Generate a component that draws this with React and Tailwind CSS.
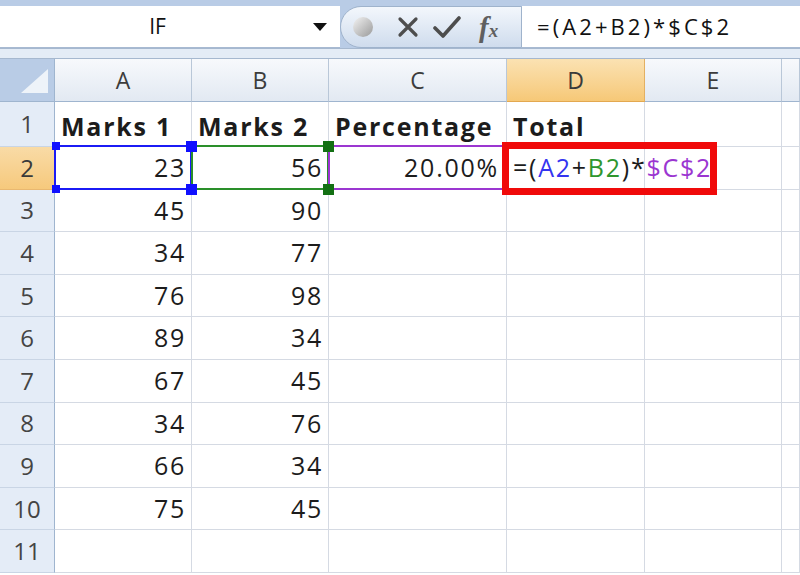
import React from "react";

const font = { fontFamily: '"Open Sans", "Liberation Sans", sans-serif' };

const columns = [
  { key: "A", w: "w-[137px]" },
  { key: "B", w: "w-[137px]" },
  { key: "C", w: "w-[178px]" },
  { key: "D", w: "w-[138px]" },
  { key: "E", w: "w-[137px]" },
  { key: "F", w: "w-[18px]" },
];

const marks = [
  [23, 56],
  [45, 90],
  [34, 77],
  [76, 98],
  [89, 34],
  [67, 45],
  [34, 76],
  [66, 34],
  [75, 45],
];

// selection outline with corner handles, drawn over a cell
const Outline = ({ color, handle, big, hideRight }) => (
  <>
    <div
      className={`absolute -left-px -top-[2px] -right-px -bottom-px border-2 ${color} ${hideRight ? "border-r-0" : ""}`}
    />
    <span className={`absolute -left-[3px] -top-[5px] w-[8px] h-[8px] ${handle}`} />
    <span className={`absolute -left-[3px] -bottom-[4px] w-[8px] h-[8px] ${handle}`} />
    {big && (
      <>
        <span className={`absolute -right-[6px] -top-[6px] w-[11px] h-[11px] z-10 ${handle}`} />
        <span className={`absolute -right-[6px] -bottom-[6px] w-[11px] h-[11px] z-10 ${handle}`} />
      </>
    )}
  </>
);

const RowHeader = ({ n, active, h }) => (
  <div
    className={`w-[55px] ${h} shrink-0 flex items-center justify-center border-r border-b text-[24px] ${
      active
        ? "bg-gradient-to-b from-[#f9dba6] to-[#f6c97c] border-r-[#e0a85a] border-b-[#e9b870] text-[#3a3a3a]"
        : "bg-[#e4ecf7] border-r-[#9fb5cf] border-b-[#c9d5e5] text-[#444]"
    }`}
  >
    {n}
  </div>
);

const Cell = ({ w, h, children, right, bold, extra = "" }) => (
  <div
    className={`${w} ${h} shrink-0 relative flex items-center border-r border-b border-[#d5dae3] text-[25px] tracking-[0.07em] text-[#1c1c1c] ${
      right ? "justify-end pr-[5px]" : "pl-[6px]"
    } ${bold ? "font-bold tracking-[0.07em] pt-[5px]" : ""} ${extra}`}
  >
    {children}
  </div>
);

export default function App() {
  return (
    <div className="w-[800px] h-[575px] overflow-hidden bg-white" style={font}>
      {/* formula bar */}
      <div className="bg-[#b9cce6] pt-[6px]">
        <div className="flex h-[42px]">
          <div className="w-[340px] bg-white flex items-center border-b border-[#a8bad2]">
            <div className="flex-1 text-center text-[21px] text-[#111] pl-[2px]">IF</div>
            <div className="w-0 h-0 border-l-[7px] border-r-[7px] border-t-[8px] border-l-transparent border-r-transparent border-t-[#111] mr-[13px]" />
          </div>
          <div className="w-[182px] flex items-center rounded-l-[24px] border border-[#9fb3cc] bg-gradient-to-b from-[#f3f7fc] to-[#cfdced]">
            <div className="ml-[12px] w-[20px] h-[20px] rounded-full bg-gradient-to-br from-[#f4f4f4] to-[#9a9a9a]" />
            <svg className="ml-[24px]" width="22" height="22" viewBox="0 0 22 22">
              <path d="M3 3 L19 19 M19 3 L3 19" stroke="#4d4d4d" strokeWidth="3.2" strokeLinecap="round" />
            </svg>
            <svg className="ml-[14px]" width="28" height="24" viewBox="0 0 28 24">
              <path d="M2 13 L10 21 L26 3" stroke="#4d4d4d" strokeWidth="3.6" fill="none" strokeLinejoin="round" strokeLinecap="round" />
            </svg>
            <div
              className="ml-[18px] text-[29px] italic font-bold text-[#5f5f5f] leading-none"
              style={{ fontFamily: '"Liberation Serif", serif' }}
            >
              f<span className="text-[19px]">x</span>
            </div>
          </div>
          <div className="flex-1 bg-white flex items-center pl-[15px] border-b border-[#a8bad2] text-[22px] tracking-[0.14em] text-[#111]">
            =(A2+B2)*$C$2
          </div>
        </div>
        <div className="h-[11px] bg-[#e4ecf6] border-t border-b border-[#a6b8cf]" />
      </div>

      {/* grid */}
      <div className="relative">
        {/* column headers */}
        <div className="flex h-[43px]">
          <div className="w-[55px] shrink-0 relative bg-[#b9cce6] border-r border-b border-[#9fb5cf]">
            <svg className="absolute right-[6px] bottom-[8px]" width="27" height="24" viewBox="0 0 27 24">
              <polygon points="27,0 27,24 0,24" fill="#eef3f9" />
            </svg>
          </div>
          {columns.map((c) => (
            <div
              key={c.key}
              className={`${c.w} shrink-0 flex items-center justify-center border-r border-b text-[23px] ${
                c.key === "D"
                  ? "bg-gradient-to-b from-[#fbe2b2] to-[#f6c877] border-r-[#e3b062] border-b-[#e3a850] text-[#3a3a3a]"
                  : "bg-gradient-to-b from-[#f7f9fc] to-[#e2e9f2] border-r-[#b9c7d8] border-b-[#9fb5cf] text-[#3c3c3c]"
              }`}
            >
              {c.key === "F" ? "" : c.key}
            </div>
          ))}
        </div>

        {/* row 1 */}
        <div className="flex">
          <RowHeader n={1} h="h-[45px]" />
          <Cell w="w-[137px]" h="h-[45px]" bold>Marks 1</Cell>
          <Cell w="w-[137px]" h="h-[45px]" bold>Marks 2</Cell>
          <Cell w="w-[178px]" h="h-[45px]" bold>Percentage</Cell>
          <Cell w="w-[138px]" h="h-[45px]" bold>Total</Cell>
          <Cell w="w-[137px]" h="h-[45px]" />
          <Cell w="w-[18px]" h="h-[45px]" />
        </div>

        {/* row 2 */}
        <div className="flex">
          <RowHeader n={2} h="h-[42.6px]" active />
          <Cell w="w-[137px]" h="h-[42.6px]" right>
            23
            <Outline color="border-[#1b1bf5]" handle="bg-[#1010ff]" big />
          </Cell>
          <Cell w="w-[137px]" h="h-[42.6px]" right>
            56
            <Outline color="border-[#2a8f2a]" handle="bg-[#137013]" big />
          </Cell>
          <Cell w="w-[178px]" h="h-[42.6px]" right extra="pr-[7px]">
            20.00%
            <Outline color="border-[#9b36d1]" handle="bg-[#8e22c8]" hideRight />
          </Cell>
          <Cell w="w-[138px]" h="h-[42.6px]" extra="overflow-visible whitespace-nowrap z-10">
            <span>
              =(<span className="text-[#3434f0]">A2</span>+<span className="text-[#2e962e]">B2</span>)*
              <span className="text-[#9b36d1]">$C$2</span>
            </span>
          </Cell>
          <Cell w="w-[137px]" h="h-[42.6px]" />
          <Cell w="w-[18px]" h="h-[42.6px]" />
        </div>

        {/* rows 3..11 */}
        {[...marks.slice(1), [null, null]].map((m, i) => (
          <div key={i} className="flex">
            <RowHeader n={i + 3} h="h-[42.6px]" />
            <Cell w="w-[137px]" h="h-[42.6px]" right>{m[0]}</Cell>
            <Cell w="w-[137px]" h="h-[42.6px]" right>{m[1]}</Cell>
            <Cell w="w-[178px]" h="h-[42.6px]" />
            <Cell w="w-[138px]" h="h-[42.6px]" />
            <Cell w="w-[137px]" h="h-[42.6px]" />
            <Cell w="w-[18px]" h="h-[42.6px]" />
          </div>
        ))}

        {/* red annotation box */}
        <div className="absolute left-[502px] top-[83px] w-[215px] h-[53px] border-[7px] border-[#f00a0a] z-20 pointer-events-none" />
      </div>
    </div>
  );
}
